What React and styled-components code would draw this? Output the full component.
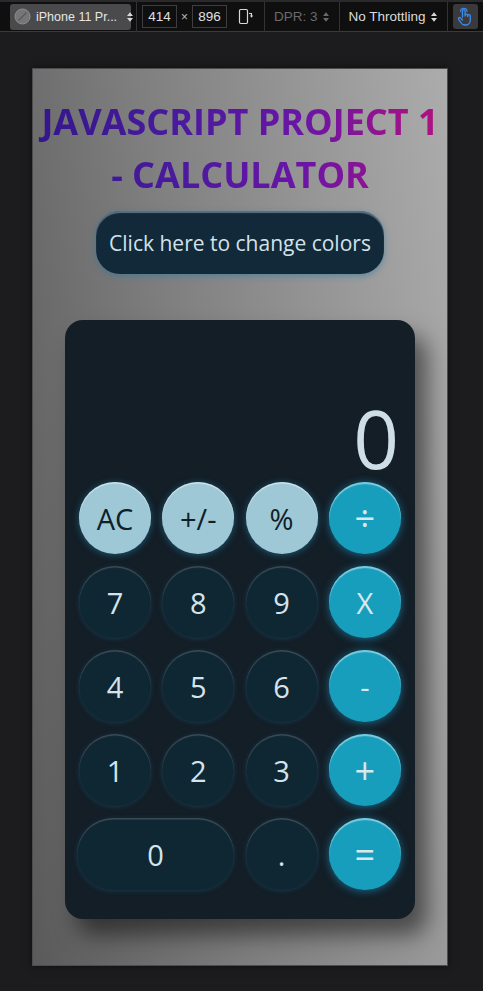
import React from "react";
import styled, { createGlobalStyle, css } from "styled-components";

const GlobalStyle = createGlobalStyle`
  html, body {
    margin: 0;
    padding: 0;
    background: #1c1c1e;
  }
  body {
    font-family: "Open Sans", "Liberation Sans", sans-serif;
  }
`;

const keys = [
  { label: "AC", kind: "func" },
  { label: "+/-", kind: "func" },
  { label: "%", kind: "func" },
  { label: "÷", kind: "op", big: true },
  { label: "7" },
  { label: "8" },
  { label: "9" },
  { label: "X", kind: "op" },
  { label: "4" },
  { label: "5" },
  { label: "6" },
  { label: "-", kind: "op" },
  { label: "1" },
  { label: "2" },
  { label: "3" },
  { label: "+", kind: "op", big: true },
  { label: "0", wide: true },
  { label: "." },
  { label: "=", kind: "op", big: true },
];

export default function App() {
  return (
    <>
      <GlobalStyle />
      <Toolbar>
        <DeviceSelect>
          <NoIcon />
          <DeviceName>iPhone 11 Pr...</DeviceName>
          <Arrows />
        </DeviceSelect>
        <Divider />
        <SizeInput>414</SizeInput>
        <Times>×</Times>
        <SizeInput>896</SizeInput>
        <RotateIcon />
        <Divider />
        <ToolText muted>
          DPR: 3 <Arrows muted />
        </ToolText>
        <Divider />
        <ToolText>
          No Throttling<Arrows />
        </ToolText>
        <Divider />
        <TouchButton>
          <HandIcon />
        </TouchButton>
      </Toolbar>
      <Stage>
        <Device>
          <Title>JavaScript Project 1 - Calculator</Title>
          <ColorButton>Click here to change colors</ColorButton>
          <Calculator>
            <Display>0</Display>
            <Keypad>
              {keys.map((k) => (
                <Key key={k.label} kind={k.kind} wide={k.wide} big={k.big}>
                  {k.label}
                </Key>
              ))}
            </Keypad>
          </Calculator>
        </Device>
      </Stage>
    </>
  );
}

function NoIcon() {
  return (
    <IconBox>
      <svg width="17" height="17" viewBox="0 0 17 17">
        <circle cx="8.5" cy="8.5" r="7.5" fill="#767678" stroke="#8e8e90" strokeWidth="1" />
        <line x1="4.5" y1="12.5" x2="12.5" y2="4.5" stroke="#5a5a5c" strokeWidth="1.5" />
      </svg>
    </IconBox>
  );
}

function Arrows({ muted }) {
  const c = muted ? "#6a6a6c" : "#d8d8d8";
  return (
    <IconBox style={{ marginLeft: 4 }}>
      <svg width="8" height="12" viewBox="0 0 8 12">
        <path d="M1 5 L4 1.2 L7 5 Z" fill={c} />
        <path d="M1 7 L4 10.8 L7 7 Z" fill={c} />
      </svg>
    </IconBox>
  );
}

function RotateIcon() {
  return (
    <RotateWrap>
      <svg width="16" height="17" viewBox="0 0 16 17">
        <rect x="1.5" y="1.5" width="8" height="14" rx="1.2" fill="none" stroke="#d8d8d8" strokeWidth="1.2" />
        <path d="M11 5.5 h2.5 v2.5" fill="none" stroke="#d8d8d8" strokeWidth="1.1" />
        <path d="M11.8 7.5 L13.5 9.7 L15.2 7.5 Z" fill="#d8d8d8" />
      </svg>
    </RotateWrap>
  );
}

function HandIcon() {
  return (
    <svg width="16" height="19" viewBox="0 0 16 19">
      <path
        d="M5.5 10 V4 a1.3 1.3 0 0 1 2.6 0 V9 M8.1 8.5 a1.3 1.3 0 0 1 2.6 0 V9.5 M10.7 9 a1.3 1.3 0 0 1 2.6 0 V13 c0 3 -2 5 -4.5 5 h-1 c-2 0 -3 -1 -4 -2.5 L1.6 12.3 a1.2 1.2 0 0 1 1.9 -1.4 L5.5 13"
        fill="none"
        stroke="#3d8ef0"
        strokeWidth="1.3"
        strokeLinecap="round"
        strokeLinejoin="round"
      />
      <path d="M3.6 4.5 a3.2 3.2 0 0 1 6.4 0" fill="none" stroke="#3d8ef0" strokeWidth="1.1" strokeLinecap="round" />
    </svg>
  );
}

// Devtools toolbar
const Toolbar = styled.div`
  display: flex;
  align-items: center;
  padding-left: 10px;
  background: #0f0f10;
  border-top: 2px solid #2a2a2c;
  border-bottom: 1px solid #3a3a3c;
  box-sizing: border-box;
  height: 32px;
  font-family: "Liberation Sans", "DejaVu Sans", sans-serif;
  font-size: 13.5px;
  color: #dcdcdc;
`;

const IconBox = styled.span`
  display: flex;
  align-items: center;
  flex-shrink: 0;
`;

const DeviceSelect = styled.div`
  display: flex;
  align-items: center;
  gap: 5px;
  height: 26px;
  width: 121px;
  flex-shrink: 0;
  box-sizing: border-box;
  padding: 0 4px;
  background: #4a4a4c;
  border-radius: 3px;
  color: #e6e6e6;
`;

const DeviceName = styled.span`
  flex: 1;
  font-size: 12.5px;
  white-space: nowrap;
`;

const Divider = styled.div`
  width: 1px;
  height: 30px;
  background: #333335;
  margin: 0 5px;
`;

const SizeInput = styled.div`
  width: 35px;
  height: 23px;
  box-sizing: border-box;
  border: 1px solid #3e3e40;
  display: flex;
  align-items: center;
  justify-content: center;
  color: #e0e0e0;
`;

const Times = styled.span`
  width: 15px;
  text-align: center;
  color: #bbb;
  font-size: 12px;
`;

const RotateWrap = styled.div`
  display: flex;
  align-items: center;
  margin-left: 11px;
  margin-right: 5px;
`;

const ToolText = styled.div`
  display: flex;
  align-items: center;
  padding: 0 4px;
  color: ${({ muted }) => (muted ? "#6a6a6c" : "#dcdcdc")};
  white-space: nowrap;
`;

const TouchButton = styled.div`
  width: 25px;
  height: 25px;
  border-radius: 3px;
  background: #3a3a3c;
  display: flex;
  align-items: center;
  justify-content: center;
`;

// Page area around the emulated device
const Stage = styled.div`
  padding: 36px 0 40px 32px;
  background: #1c1c1e;
  min-height: 959px;
  box-sizing: border-box;
`;

const Device = styled.div`
  width: 414px;
  height: 896px;
  border: 1px solid #4c4c4e;
  box-shadow: 0 0 8px rgba(0, 0, 0, 0.5);
  background: linear-gradient(82deg, #5a5a5a 0%, #7d7d7d 40%, #acacac 100%);
  display: flex;
  flex-direction: column;
  align-items: center;
  overflow: hidden;
`;

const Title = styled.h1`
  margin: 26px 0 0;
  width: 100%;
  text-align: center;
  text-transform: uppercase;
  font-family: "Open Sans", sans-serif;
  font-weight: 700;
  font-size: 36px;
  line-height: 53px;
  background: linear-gradient(to right, #33168c 0%, #4a1a9e 35%, #6a15a6 65%, #b3117e 100%);
  -webkit-background-clip: text;
  background-clip: text;
  color: transparent;
`;

const ColorButton = styled.button`
  margin-top: 10px;
  width: 288px;
  height: 63px;
  border: none;
  border-radius: 24px;
  background: #12293a;
  color: #d3e2ea;
  font-family: "Open Sans", sans-serif;
  font-size: 21px;
  box-shadow: inset 0 2px 1px rgba(180, 200, 210, 0.45), 0 2px 6px rgba(40, 120, 160, 0.55);
`;

const Calculator = styled.div`
  margin-top: 46px;
  width: 350px;
  height: 599px;
  box-sizing: border-box;
  border-radius: 18px;
  background: #131e27;
  padding: 14px 14px 29px;
  display: flex;
  flex-direction: column;
  justify-content: flex-end;
  gap: 8px;
  box-shadow: 12px 16px 22px rgba(0, 0, 0, 0.5);
`;

const Display = styled.div`
  text-align: right;
  padding-right: 2px;
  margin-bottom: -4px;
  color: #cfdde6;
  font-family: "Open Sans", sans-serif;
  font-weight: 400;
  font-size: 80px;
  line-height: 80px;
`;

const Keypad = styled.div`
  display: grid;
  grid-template-columns: repeat(4, 72px);
  grid-auto-rows: 72px;
  column-gap: 11.3px;
  row-gap: 12px;
`;

const Key = styled.div`
  display: flex;
  align-items: center;
  justify-content: center;
  border-radius: 36px;
  font-family: "Open Sans", sans-serif;
  font-size: 29px;
  background: #0f2733;
  color: #d5e4ec;
  box-shadow: inset 0 1.5px 1px rgba(150, 150, 150, 0.35), 0 1px 5px rgba(30, 90, 120, 0.45);

  ${({ wide }) =>
    wide &&
    css`
      grid-column: span 2;
      margin-left: -2px;
    `}

  ${({ kind }) =>
    kind === "func" &&
    css`
      background: #9ec8d6;
      color: #10202a;
      box-shadow: inset 0 1.5px 1px rgba(255, 255, 255, 0.5), 0 1px 7px rgba(40, 140, 180, 0.55);
    `}

  ${({ kind }) =>
    kind === "op" &&
    css`
      background: #179ebc;
      color: #d8e8ee;
      box-shadow: inset 0 2px 1px rgba(220, 240, 250, 0.55), 0 1px 8px rgba(30, 160, 210, 0.6);
    `}

  ${({ big }) =>
    big &&
    css`
      font-size: 36px;
    `}
`;
